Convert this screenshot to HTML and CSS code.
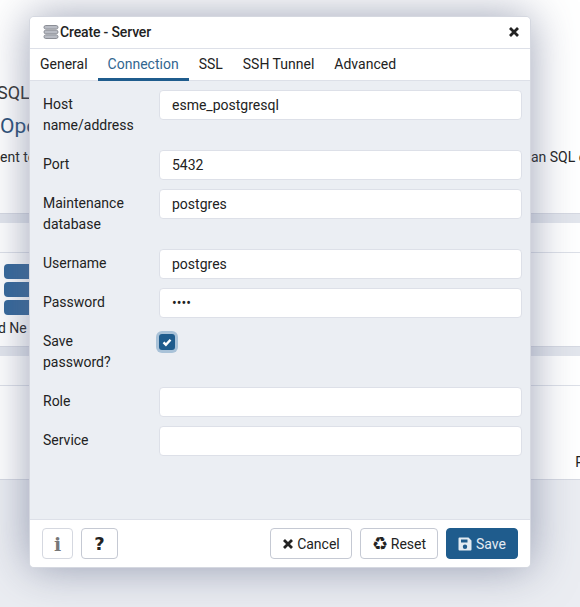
FILE: index.html
```html
<!DOCTYPE html>
<html lang="en">

<head>
  <meta charset="UTF-8" />
  <title>Create - Server</title>
  <link rel="stylesheet" href="styles.css">
</head>

<body>
  <!-- page behind the dialog -->
  <div class="page">
    <div class="welcome">
      <p class="sql">SQL</p>
      <p class="open">Ope</p>
      <div class="intro"><span>ent to</span><span>an SQL c</span></div>
    </div>
    <div class="band"></div>
    <div class="panel-head"></div>
    <div class="links">
      <div class="stack"><i></i><i></i><i></i></div>
      <p>d Ne</p>
    </div>
    <div class="band"></div>
    <div class="panel-head"></div>
    <div class="guides"><span>P</span></div>
    <div class="foot"></div>
  </div>

  <div class="dialog">
    <div class="title">
      <svg class="server" viewBox="0 0 16 14" width="16" height="14">
        <rect x="1" y="0.5" width="14" height="3.6" rx="1.8" />
        <rect x="1" y="5.2" width="14" height="3.6" rx="1.8" />
        <rect x="1" y="9.9" width="14" height="3.6" rx="1.8" />
      </svg>
      <span class="title-text">Create - Server</span>
      <svg class="close" viewBox="0 0 12 12" width="12" height="12">
        <path d="M2 2l8 8M10 2l-8 8" />
      </svg>
    </div>

    <ul class="tabs">
      <li>General</li>
      <li class="current">Connection</li>
      <li>SSL</li>
      <li>SSH Tunnel</li>
      <li>Advanced</li>
    </ul>

    <div class="form">
      <div class="row">
        <label>Host name/address</label>
        <input class="field" type="text" value="esme_postgresql">
      </div>
      <div class="row">
        <label>Port</label>
        <input class="field" type="text" value="5432">
      </div>
      <div class="row">
        <label>Maintenance database</label>
        <input class="field" type="text" value="postgres">
      </div>
      <div class="row">
        <label>Username</label>
        <input class="field" type="text" value="postgres">
      </div>
      <div class="row">
        <label>Password</label>
        <input class="field" type="password" value="test">
      </div>
      <div class="row">
        <label>Save password?</label>
        <span class="check">
          <svg viewBox="0 0 10 10" width="10" height="10"><path d="M1.5 5.400l2.400 2.300 4.600-5" /></svg>
        </span>
      </div>
      <div class="row">
        <label>Role</label>
        <input class="field" type="text">
      </div>
      <div class="row">
        <label>Service</label>
        <input class="field" type="text">
      </div>
    </div>

    <div class="footer">
      <button class="btn icon muted"><span class="info">i</span></button>
      <button class="btn icon"><span class="help">?</span></button>
      <span class="spacer"></span>
      <button class="btn">
        <svg class="x" viewBox="0 0 12 12" width="12" height="12"><path d="M2 2l8 8M10 2l-8 8" /></svg>Cancel
      </button>
      <button class="btn"><span class="recycle">♻</span>Reset</button>
      <button class="btn primary">
        <svg viewBox="0 0 14 14" width="14" height="14">
          <path fill-rule="evenodd" d="M1.500 0.500h9l3 3v9a1 1 0 0 1-1 1h-11a1 1 0 0 1-1-1v-11a1 1 0 0 1 1-1zM3 2.500v3h6.500v-3zM7 7.500a2.200 2.200 0 1 0 0 4.400a2.200 2.200 0 0 0 0-4.400z" />
        </svg>Save
      </button>
    </div>
  </div>
</body>

</html>
```

FILE: styles.css
```css
* {
  padding: 0;
  margin: 0;
  box-sizing: border-box;
}

html,
body {
  height: 100%;
  overflow: hidden;
}

body {
  font-family: Roboto, "Liberation Sans", sans-serif;
  font-size: 14px;
  color: #222;
  background: #fff;
}

/* page behind the dialog */
.page {
  height: 607px;
  display: flex;
  flex-direction: column;
  overflow: hidden;
}

.welcome {
  height: 213px;
  padding-top: 82px;
}

.sql {
  font-size: 18px;
  line-height: 22px;
  margin-left: -3px;
  color: #333;
}

.open {
  font-size: 21px;
  line-height: 24px;
  margin-top: 10px;
  color: #2b4f78;
}

.intro {
  display: flex;
  justify-content: space-between;
  line-height: 20px;
  margin-top: 9px;
  margin-right: -6px;
}

.band {
  height: 10px;
  background: #e3e6ed;
  border-top: 1px solid #d6d9e2;
}

.panel-head {
  height: 30px;
  border-bottom: 1px solid #dde0e8;
}

.links {
  height: 93px;
  padding-top: 11px;
}

.stack {
  display: flex;
  flex-direction: column;
  gap: 3px;
  margin-left: 4px;
}

.stack i {
  display: block;
  width: 50px;
  height: 15px;
  border-radius: 4px;
  background: #336699;
}

.links p {
  line-height: 20px;
  margin-top: 3px;
  margin-left: -2px;
}

.guides {
  height: 93px;
  display: flex;
  justify-content: flex-end;
  align-items: flex-end;
  padding-bottom: 9px;
  margin-right: -4px;
}

.foot {
  flex: 1;
  background: #ebedf2;
  border-top: 1px solid #d6d9e2;
}

/* dialog */
.dialog {
  position: absolute;
  left: 29px;
  top: 16px;
  width: 502px;
  height: 552px;
  display: flex;
  flex-direction: column;
  background: #ebeef3;
  border-radius: 5px;
  border: 1px solid #d5d8e0;
  box-shadow: 0 0 45px rgba(95, 105, 135, 0.62);
  overflow: hidden;
}

.title {
  height: 32px;
  flex: none;
  display: flex;
  align-items: center;
  padding: 0 10px 1px 13px;
  background: #fff;
  border-bottom: 1px solid #dde0e8;
}

.server {
  margin-right: 1px;
}

.server rect {
  fill: #b9bcc4;
  stroke: #8b8e96;
  stroke-width: 1;
}

.title-text {
  flex: 1;
  font-weight: 500;
  letter-spacing: -0.15px;
  color: #222;
}

.close path,
.x path {
  fill: none;
  stroke: #222;
  stroke-width: 2.8;
}

.tabs {
  height: 32px;
  flex: none;
  display: flex;
  list-style: none;
  background: #fff;
  border-bottom: 1px solid #dde0e8;
}

.tabs li {
  padding: 0 10px;
  line-height: 30px;
  height: 32px;
  color: #222;
}

.tabs li.current {
  color: #326690;
  border-bottom: 3px solid #1f5c8d;
}

.form {
  flex: 1;
  padding: 9px 8px 0 13px;
  display: flex;
  flex-direction: column;
  gap: 9px;
}

.row {
  display: grid;
  grid-template-columns: 116px 1fr;
  align-items: start;
}

.row label {
  line-height: 21px;
  padding: 4px 0 5px;
  width: 96px;
  color: #222;
}

.field {
  display: block;
  width: 363px;
  height: 30px;
  padding: 0 12px;
  border: 1px solid #dde0e8;
  border-radius: 4px;
  background: #fff;
  font: 14px Roboto, "Liberation Sans", sans-serif;
  color: #222;
}

.check {
  display: flex;
  align-items: center;
  justify-content: center;
  width: 16px;
  height: 16px;
  margin-top: 7px;
  border-radius: 3px;
  background: #1f5c8d;
  box-shadow: 0 0 0 3px #a9c2d8;
}

.check path {
  fill: none;
  stroke: #fff;
  stroke-width: 2.4;
}

.footer {
  height: 48px;
  flex: none;
  display: flex;
  align-items: center;
  gap: 8px;
  padding: 0 12px;
  background: #fff;
  border-top: 1px solid #dde0e8;
}

.spacer {
  flex: 1;
}

.btn {
  height: 31px;
  padding: 0 11px;
  display: flex;
  align-items: center;
  gap: 3px;
  border: 1px solid #c5c9d3;
  border-radius: 4px;
  background: #fff;
  font: 14px Roboto, "Liberation Sans", sans-serif;
  color: #222;
}

.btn.icon {
  justify-content: center;
  padding: 0;
  width: 37px;
  font-size: 16px;
  font-weight: 900;
}

.btn.muted {
  width: 31px;
  border-color: #d5d8e0;
}

.btn.muted .info {
  color: #777;
  font-family: "DejaVu Serif", serif;
  font-weight: 700;
  font-size: 19px;
}

.help {
  font-family: "DejaVu Sans", sans-serif;
  font-weight: 700;
  font-size: 18px;
}

.recycle {
  width: 16px;
  font-family: "DejaVu Sans", sans-serif;
  font-size: 18px;
  line-height: 1;
  display: flex;
  justify-content: center;
}

.btn.primary {
  background: #1f5c8d;
  border-color: #1f5c8d;
  color: #e3ebf2;
  gap: 4px;
}

.primary svg path {
  fill: #e3ebf2;
}
```
